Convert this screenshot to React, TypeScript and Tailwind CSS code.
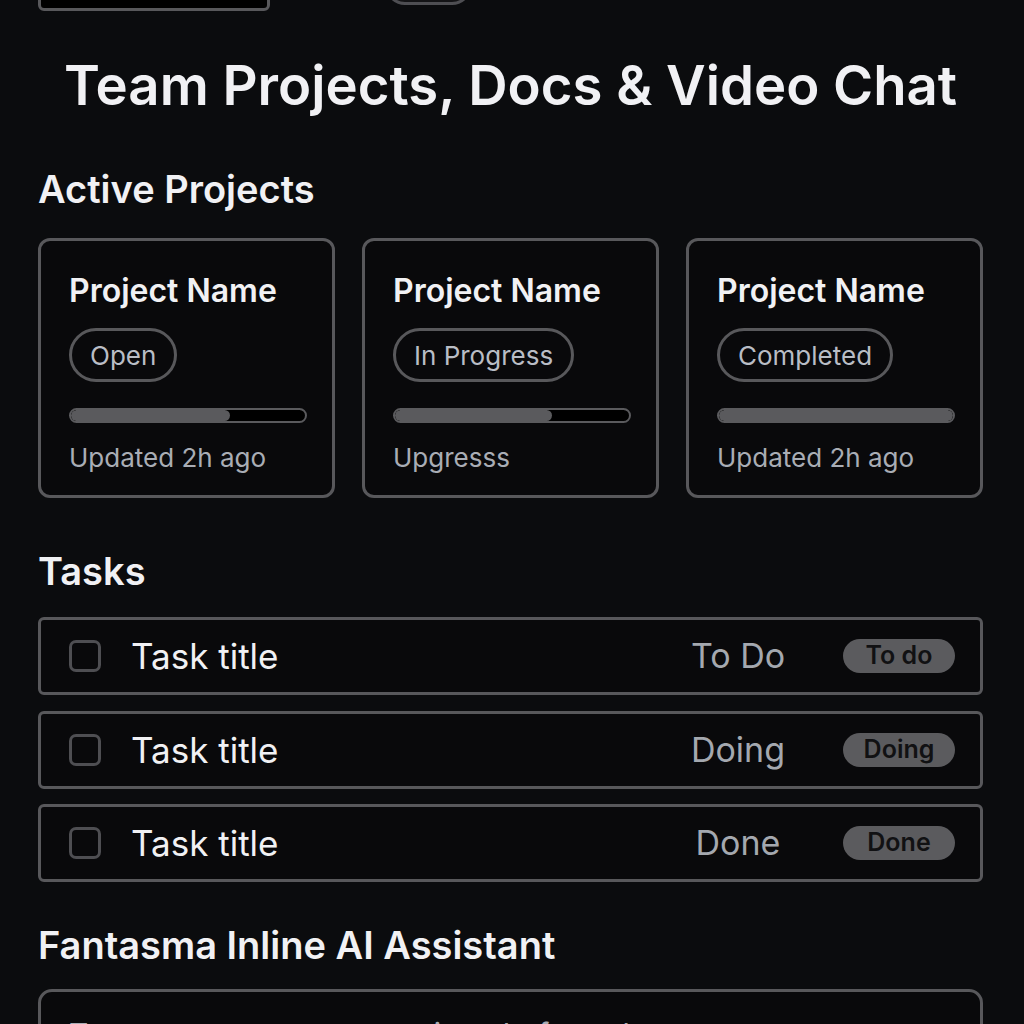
const projects = [
  { name: 'Project Name', status: 'Open', progress: 68, note: 'Updated 2h ago' },
  { name: 'Project Name', status: 'In Progress', progress: 67, note: 'Upgresss' },
  { name: 'Project Name', status: 'Completed', progress: 100, note: 'Updated 2h ago' },
];

const tasks = [
  { title: 'Task title', status: 'To Do', badge: 'To do' },
  { title: 'Task title', status: 'Doing', badge: 'Doing' },
  { title: 'Task title', status: 'Done', badge: 'Done' },
];

function ProjectCard({ name, status, progress, note }: (typeof projects)[number]) {
  return (
    <div className="h-[260px] rounded-[12px] border-[3px] border-[#58585b] bg-[#09090b] pl-[28px] pr-[25px] pt-[31px]">
      <p className="text-[32px] font-semibold leading-[38px] text-[#f1f1f4]">{name}</p>

      {/* Status pill */}
      <div className="mt-[18px] flex">
        <span className="flex h-[54px] items-center rounded-full border-[3px] border-[#58585b] px-[18px] text-[26px] text-[#b9bdc5]">
          {status}
        </span>
      </div>

      {/* Progress */}
      <div className="mt-[26px] h-[15px] overflow-hidden rounded-full border-[2px] border-[#5a5a5d] bg-black">
        <div className="h-full rounded-full bg-[#5a5a5d]" style={{ width: `${progress}%` }} />
      </div>

      <p className="mt-[19px] text-[26px] leading-[32px] text-[#a9adb5]">{note}</p>
    </div>
  );
}

function TaskRow({ title, status, badge }: (typeof tasks)[number]) {
  return (
    <div className="flex h-[78px] items-center rounded-[6px] border-[3px] border-[#58585b] bg-[#09090b] pl-[28px] pr-[25px]">
      <div className="h-[32px] w-[32px] rounded-[7px] border-[3px] border-[#4e4e52]" />
      <span className="ml-[30px] flex-1 text-[35px] leading-[40px] text-[#f1f1f4]">{title}</span>
      <span className="w-[124px] text-center text-[34px] leading-[40px] text-[#a4a8af]">{status}</span>
      <span className="ml-[43px] flex h-[34px] w-[112px] items-center justify-center rounded-full bg-[#5b5b5e] text-[25px] font-semibold text-[#111113]">
        {badge}
      </span>
    </div>
  );
}

export default function App() {
  return (
    <div
      className="h-[1024px] w-full overflow-hidden bg-[#0b0c0e] pl-[38px] pr-[41px]"
      style={{ fontFamily: 'Inter, "Noto Sans", sans-serif' }}
    >
      {/* Cut-off header controls */}
      <div className="flex h-[11px] items-end">
        <div className="h-[50px] w-[232px] shrink-0 rounded-[6px] border-[3px] border-[#58585b] bg-black" />
        <div className="mb-[6px] ml-[115px] h-[40px] w-[87px] shrink-0 rounded-full border-[3px] border-[#4e4e52] bg-[#141416]" />
      </div>

      <h1 className="mt-[42px] text-center text-[54.5px] font-semibold leading-[64px] text-[#f1f1f4]">
        Team Projects, Docs &amp; Video Chat
      </h1>

      <h2 className="mt-[49px] text-[38px] font-semibold leading-[46px] text-[#f1f1f4]">Active Projects</h2>
      <div className="mt-[26px] grid grid-cols-3 gap-[27px]">
        {projects.map((p, i) => (
          <ProjectCard key={i} {...p} />
        ))}
      </div>

      <h2 className="mt-[50px] text-[38px] font-semibold leading-[46px] text-[#f1f1f4]">Tasks</h2>
      <div className="mt-[23px] flex flex-col gap-[15.5px]">
        {tasks.map((t, i) => (
          <TaskRow key={i} {...t} />
        ))}
      </div>

      <h2 className="mt-[40px] text-[38px] font-semibold leading-[46px] text-[#f1f1f4]">
        Fantasma Inline AI Assistant
      </h2>
      <div className="mt-[21px] h-[120px] rounded-[14px] border-[3px] border-[#58585b] bg-[#09090b] pl-[28px] pt-[24px]">
        <p className="text-[30px] leading-[36px] text-[#a9adb5]">Type a prompt to summarize, draft or plan…</p>
      </div>
    </div>
  );
}
